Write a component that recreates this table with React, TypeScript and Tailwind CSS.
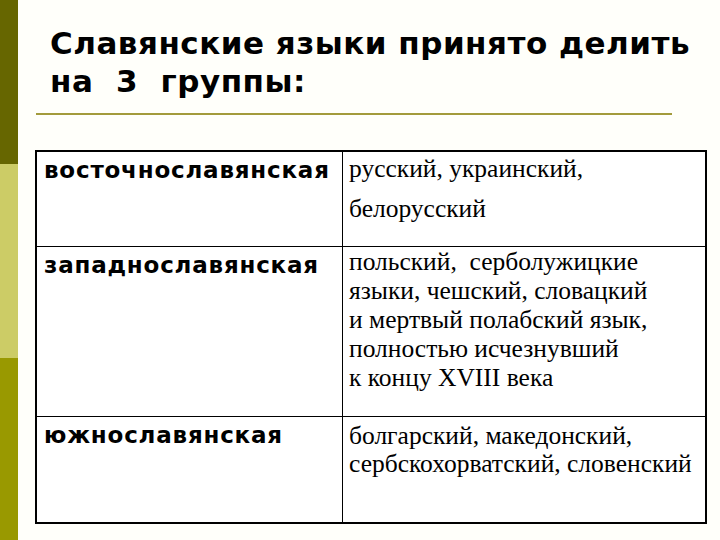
import React from 'react';

const rows = [
  {
    group: 'восточнославянская',
    langs: ['русский, украинский,', 'белорусский'],
    h: 'h-[94px]',
    lh: 'leading-[40px] -mt-[3px]',
  },
  {
    group: 'западнославянская',
    langs: [
      'польский,  серболужицкие',
      'языки, чешский, словацкий',
      'и мертвый полабский язык,',
      'полностью исчезнувший',
      'к концу XVIII века',
    ],
    h: 'h-[170px]',
    lh: 'leading-[29px]',
  },
  {
    group: 'южнославянская',
    langs: ['болгарский, македонский,', 'сербскохорватский, словенский'],
    h: 'h-[106px]',
    lh: 'leading-[28px] pt-[5px]',
  },
];

const App: React.FC = () => {
  return (
    <div className="w-[720px] h-[540px] flex bg-[#fffffa] overflow-hidden">
      <div className="w-[18px] flex flex-col shrink-0">
        <div className="h-[164px] bg-[#666600]" />
        <div className="h-[194px] bg-[#cccc66]" />
        <div className="flex-1 bg-[#999900]" />
      </div>

      <div className="flex-1 pl-[17px]">
        <h1 className="pl-[15px] pt-[24px] text-[31px] tracking-[0.5px] leading-[38px] font-bold text-black font-['DejaVu_Sans',sans-serif]">
          Славянские языки принято делить
          <br />
          на&nbsp; 3&nbsp; группы:
        </h1>
        <div className="mt-[13px] ml-[1px] w-[636px] h-[2px] bg-[#a39b3c]" />

        <div className="mt-[35px] w-[672px] border-2 border-black bg-white">
          {rows.map((row, i) => (
            <div key={row.group} className={`flex ${row.h} ${i > 0 ? 'border-t border-black' : ''}`}>
              <div className="w-[306px] shrink-0 border-r border-black pl-[7px] pt-[5px] text-[23px] tracking-[0.8px] leading-[26px] font-bold text-black font-['DejaVu_Sans',sans-serif]">
                {row.group}
              </div>
              <div className="flex-1 pl-[6px] text-[25.5px] text-black font-['Liberation_Serif',serif]">
                <div className={row.lh}>
                  {row.langs.map((l) => (
                    <div key={l} className="whitespace-pre">{l}</div>
                  ))}
                </div>
              </div>
            </div>
          ))}
        </div>
      </div>
    </div>
  );
};

export default App;
